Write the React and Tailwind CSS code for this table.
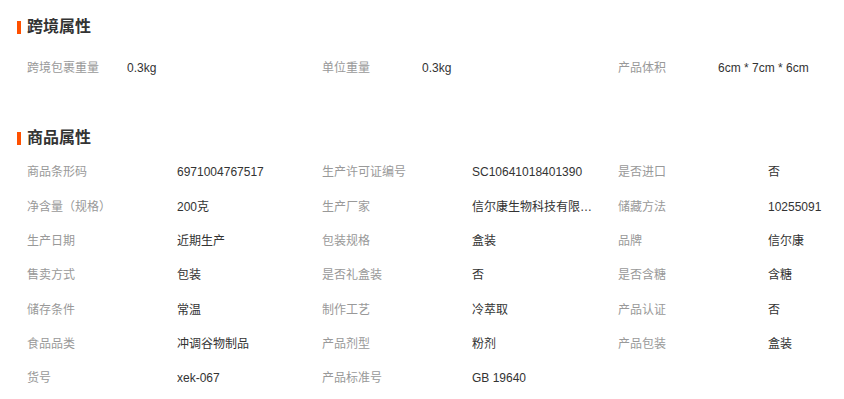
import React from 'react';

const crossBorder = [
  ['跨境包裹重量', '0.3kg'],
  ['单位重量', '0.3kg'],
  ['产品体积', '6cm * 7cm * 6cm'],
];

const goods = [
  ['商品条形码', '6971004767517'],
  ['生产许可证编号', 'SC10641018401390'],
  ['是否进口', '否'],
  ['净含量（规格）', '200克'],
  ['生产厂家', '信尔康生物科技有限责任公司'],
  ['储藏方法', '10255091'],
  ['生产日期', '近期生产'],
  ['包装规格', '盒装'],
  ['品牌', '信尔康'],
  ['售卖方式', '包装'],
  ['是否礼盒装', '否'],
  ['是否含糖', '含糖'],
  ['储存条件', '常温'],
  ['制作工艺', '冷萃取'],
  ['产品认证', '否'],
  ['食品品类', '冲调谷物制品'],
  ['产品剂型', '粉剂'],
  ['产品包装', '盒装'],
  ['货号', 'xek-067'],
  ['产品标准号', 'GB 19640'],
];

const SectionTitle = ({ children }) => (
  <div className="flex items-center h-[20px]">
    <span className="w-[4px] h-[13px] bg-[#ff5000] ml-[17px]"></span>
    <h2 className="ml-[6px] text-[16px] font-bold text-[#333]">{children}</h2>
  </div>
);

const Attr = ({ label, value, labelWidth }) => (
  <div className="flex items-center h-[34.33px] text-[12px]">
    <span className={`${labelWidth} shrink-0 text-[#999]`}>{label}</span>
    <span className="w-[124px] truncate text-[#333]">{value}</span>
  </div>
);

export default function App() {
  return (
    <div
      className="w-[844px] h-[399px] bg-white overflow-hidden"
      style={{ fontFamily: '"Liberation Sans", "Noto Sans CJK SC", sans-serif' }}
    >
      {/* 跨境属性 */}
      <div className="pt-[17px]">
        <SectionTitle>跨境属性</SectionTitle>
        <div className="grid grid-cols-[295px_296px_1fr] pl-[27px] mt-[14px]">
          {crossBorder.map(([label, value]) => (
            <Attr key={label} label={label} value={value} labelWidth="w-[100px]" />
          ))}
        </div>
      </div>

      {/* 商品属性 */}
      <div className="mt-[43px]">
        <SectionTitle>商品属性</SectionTitle>
        <div className="grid grid-cols-[295px_296px_1fr] pl-[27px] mt-[7px]">
          {goods.map(([label, value]) => (
            <Attr key={label} label={label} value={value} labelWidth="w-[150px]" />
          ))}
        </div>
      </div>
    </div>
  );
}
